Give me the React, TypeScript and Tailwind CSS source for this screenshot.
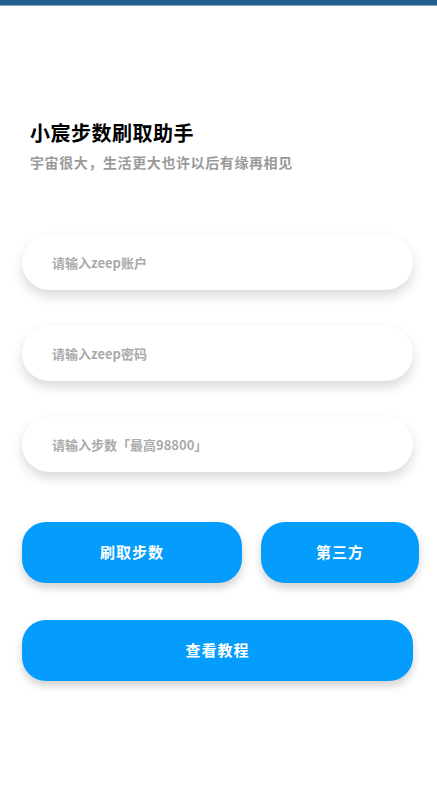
import { useState } from "react";

const font = { fontFamily: '"Noto Sans CJK SC", "Noto Sans", sans-serif' };

const Field = ({ placeholder, type = "text" }: { placeholder: string; type?: string }) => {
  const [value, setValue] = useState("");
  return (
    <div className="h-[55px] w-[391px] rounded-full bg-white shadow-[0_6px_12px_rgba(0,0,0,0.15)] flex items-center px-[30px]">
      <input
        type={type}
        value={value}
        onChange={(e) => setValue(e.target.value)}
        placeholder={placeholder}
        className="w-full bg-transparent outline-none text-[13px] font-bold text-gray-700 placeholder:text-[#aaaaaa]"
        style={font}
      />
    </div>
  );
};

const Btn = ({ label, className }: { label: string; className: string }) => (
  <button
    className={`h-[61px] rounded-[24px] bg-[#049dfd] text-white text-[15px] font-bold tracking-[1px] shadow-[0_5px_8px_rgba(0,0,0,0.18)] ${className}`}
    style={font}
  >
    {label}
  </button>
);

export default function App() {
  return (
    <div className="min-h-[800px] w-[437px] bg-white" style={font}>
      {/* status strip */}
      <div className="h-[5px] bg-[#22608f]" />
      <div className="h-[1px] bg-[#7fa3c0]" />

      <div className="pl-[30px] pt-[113px]">
        <h1 className="text-[20px] leading-[28px] font-bold text-black tracking-[0.5px]">小宸步数刷取助手</h1>
        <p className="mt-[5px] text-[14px] leading-[20px] font-bold text-[#9a9a9a] tracking-[0.6px]">
          宇宙很大，生活更大也许以后有缘再相见
        </p>
      </div>

      <div className="pl-[22px] mt-[63px] flex flex-col gap-[36px]">
        <Field placeholder="请输入zeep账户" />
        <Field placeholder="请输入zeep密码" type="password" />
        <Field placeholder="请输入步数「最高98800」" />
      </div>

      <div className="pl-[22px] mt-[50px] flex gap-[19px]">
        <Btn label="刷取步数" className="w-[220px]" />
        <Btn label="第三方" className="w-[158px]" />
      </div>

      <div className="pl-[22px] mt-[37px]">
        <Btn label="查看教程" className="w-[391px]" />
      </div>
    </div>
  );
}
